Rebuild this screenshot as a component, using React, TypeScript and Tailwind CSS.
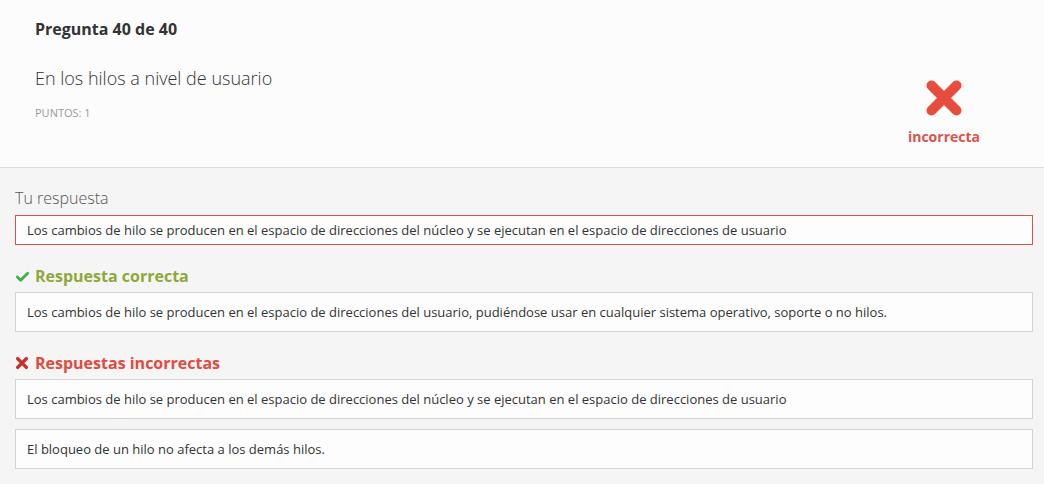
const X_PATH = 'M6 6 L26 26 M26 6 L6 26'

function Cross({ size, className }: { size: number; className?: string }) {
  return (
    <svg width={size} height={size} viewBox="0 0 32 32" className={className}>
      <path d={X_PATH} stroke="currentColor" strokeWidth={8} strokeLinecap="round" fill="none" />
    </svg>
  )
}

function Check({ size, className }: { size: number; className?: string }) {
  return (
    <svg width={size} height={size} viewBox="0 0 32 32" className={className}>
      <path d="M5 17 L12 24 L27 9" stroke="currentColor" strokeWidth={6} strokeLinecap="round" strokeLinejoin="round" fill="none" />
    </svg>
  )
}

const correct = 'Los cambios de hilo se producen en el espacio de direcciones del usuario, pudiéndose usar en cualquier sistema operativo, soporte o no hilos.'
const wrong = [
  'Los cambios de hilo se producen en el espacio de direcciones del núcleo y se ejecutan en el espacio de direcciones de usuario',
  'El bloqueo de un hilo no afecta a los demás hilos.',
]

export default function App() {
  return (
    <main className="min-h-[484px] bg-[#f5f5f5] font-['Open_Sans',sans-serif] text-[#333]">
      {/* Question header */}
      <header className="flex justify-between border-b border-[#dcdcdc] bg-[#fcfcfc] pb-[20px] pl-[35px] pr-[64px] pt-[17px]">
        <div className="flex flex-col">
          <h1 className="text-[16px] font-bold leading-[24px] text-[#333]">Pregunta 40 de 40</h1>
          <p className="mt-[24px] text-[18px] font-light leading-[26px] text-[#333]">En los hilos a nivel de usuario</p>
          <p className="mt-[15px] text-[11px] leading-[14px] text-[#999]">PUNTOS: 1</p>
        </div>
        <div className="mt-[61px] flex flex-col items-center">
          <Cross size={40} className="text-[#e74c3c]" />
          <span className="mt-[9px] text-[14px] font-bold leading-[20px] text-[#d9534f]">incorrecta</span>
        </div>
      </header>

      {/* Answers */}
      <section className="pb-[14px] pl-[15px] pr-[11px] pt-[19px]">
        <p className="text-[16px] font-light leading-[22px] text-[#555]">Tu respuesta</p>
        <div className="mt-[6px] border border-[#d9534f] bg-[#fdfdfd] px-[11px] py-[5px] text-[13px] leading-[18px]">
          {wrong[0]}
        </div>

        <h2 className="mt-[20px] flex items-center gap-[5px] text-[16px] font-bold leading-[22px] text-[#8fa83a]">
          <Check size={15} className="text-[#3fae49]" />
          Respuesta correcta
        </h2>
        <div className="mt-[5px] border border-[#d4d4d4] bg-[#fdfdfd] px-[11px] py-[10px] text-[13px] leading-[18px]">
          {correct}
        </div>

        <h2 className="mt-[20px] flex items-center gap-[6px] text-[16px] font-bold leading-[22px] text-[#e04b3f]">
          <Cross size={14} className="text-[#c9302c]" />
          Respuestas incorrectas
        </h2>
        <div className="mt-[5px] flex flex-col gap-[10px]">
          {wrong.map((w) => (
            <div key={w} className="border border-[#d4d4d4] bg-[#fdfdfd] px-[11px] py-[10px] text-[13px] leading-[18px]">
              {w}
            </div>
          ))}
        </div>
      </section>
    </main>
  )
}
